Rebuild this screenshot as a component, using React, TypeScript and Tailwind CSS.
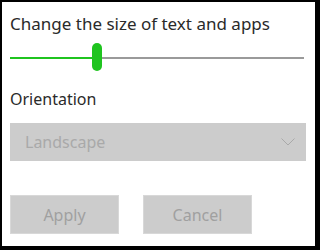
export default function App() {
  const font = { fontFamily: '"Noto Sans", "Open Sans", sans-serif' };
  return (
    <div className="w-[320px] h-[250px] bg-white border-black border-l-2 border-t-2 border-r-[5px] border-b-[4px] box-border overflow-hidden" style={font}>
      <div className="pl-[8px] pt-[12px] flex flex-col">
        <div className="h-[20px] leading-[20px] text-[17px] text-[#2a2a2a] whitespace-nowrap">Change the size of text and apps</div>
        <div className="relative mt-[9px] h-[28px] w-[294px]">
          <div className="absolute left-0 top-[14px] h-[2px] w-[83px] bg-[#1fc41f]" />
          <div className="absolute left-[83px] top-[14px] h-[2px] w-[211px] bg-[#9a9a9a]" />
          <div className="absolute left-[82px] top-0 h-[28px] w-[10px] rounded-full bg-[#1fc41f]" />
        </div>
        <div className="mt-[18px] h-[20px] leading-[20px] text-[16px] text-[#2a2a2a]">Orientation</div>
        <div className="mt-[14px] h-[38px] w-[296px] bg-[#cccccc] flex items-center justify-between pl-[15px] pr-[11px]">
          <span className="text-[16px] text-[#a9a9a9] leading-[20px]">Landscape</span>
          <svg width="14" height="8" viewBox="0 0 14 8" fill="none">
            <path d="M0.5 0.5 L7 7 L13.5 0.5" stroke="#a9a9a9" strokeWidth="1" />
          </svg>
        </div>
        <div className="mt-[34px] flex gap-[24px]">
          <div className="w-[109px] h-[39px] bg-[#cccccc] border border-[#d8d8d8] flex items-center justify-center text-[16px] text-[#a0a0a0]">Apply</div>
          <div className="w-[109px] h-[39px] bg-[#cccccc] border border-[#d8d8d8] flex items-center justify-center text-[16px] text-[#a0a0a0]">Cancel</div>
        </div>
      </div>
    </div>
  );
}
